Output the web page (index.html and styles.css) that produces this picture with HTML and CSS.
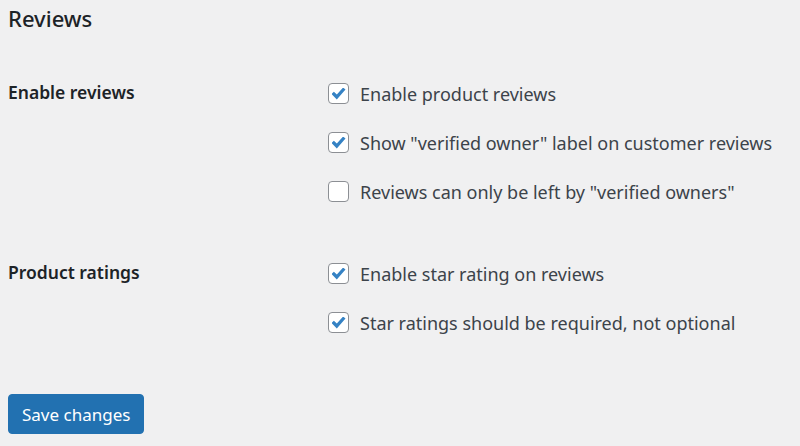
FILE: index.html
```html
<!DOCTYPE html>
<html lang="en">
<head>
<meta charset="UTF-8" />
<title>Reviews settings</title>
<link rel="stylesheet" href="styles.css">
</head>
<body>
  <form class="settings">
    <h2 class="settings-title">Reviews</h2>

    <div class="form-table">
      <div class="form-row">
        <div class="form-label">Enable reviews</div>
        <fieldset class="options">
          <label class="option"><input type="checkbox" checked> Enable product reviews</label>
          <label class="option"><input type="checkbox" checked> Show "verified owner" label on customer reviews</label>
          <label class="option"><input type="checkbox"> Reviews can only be left by "verified owners"</label>
        </fieldset>
      </div>

      <div class="form-row">
        <div class="form-label">Product ratings</div>
        <fieldset class="options">
          <label class="option"><input type="checkbox" checked> Enable star rating on reviews</label>
          <label class="option"><input type="checkbox" checked> Star ratings should be required, not optional</label>
        </fieldset>
      </div>
    </div>

    <button class="button-primary" type="button">Save changes</button>
  </form>
</body>
</html>
```

FILE: styles.css
```css
* {
  box-sizing: border-box;
}
html, body {
  margin: 0;
  padding: 0;
  height: 100%;
  background: #f0f0f1;
  font-family: "Noto Sans", "Open Sans", sans-serif;
  color: #3c434a;
}

.settings {
  padding: 0 8px;
}

/* Section heading */
.settings-title {
  margin: 0;
  padding-top: 2px;
  font-size: 22px;
  line-height: 32px;
  font-weight: 500;
  color: #1d2327;
}

/* Rows: label column + options column */
.form-table {
  display: flex;
  flex-direction: column;
  gap: 33px;
  margin-top: 35px;
}

.form-row {
  display: grid;
  grid-template-columns: 320px 1fr;
}

.form-label {
  height: 49px;
  line-height: 46px;
  font-size: 17.5px;
  font-weight: 600;
  color: #1d2327;
}

.options {
  margin: 0;
  padding: 0;
  border: none;
  display: flex;
  flex-direction: column;
}

.option {
  display: flex;
  align-items: center;
  height: 49px;
  font-size: 18px;
}

/* Checkbox, WP admin look */
.option input[type="checkbox"] {
  appearance: none;
  -webkit-appearance: none;
  width: 21px;
  height: 21px;
  margin: 0 11px 0 0;
  border: 1px solid #8c8f94;
  border-radius: 4px;
  background: #fff;
  display: inline-grid;
  place-content: center;
  flex-shrink: 0;
}

.option input[type="checkbox"]:checked::before {
  content: "";
  width: 14px;
  height: 12px;
  background: #3582c4;
  clip-path: polygon(0 54%, 17% 36%, 38% 58%, 83% 0, 100% 17%, 38% 100%);
}

/* Primary button */
.button-primary {
  margin-top: 47px;
  height: 40px;
  padding: 0 13px;
  background: #2271b1;
  border: 1px solid #2271b1;
  border-radius: 4px;
  color: #fff;
  font-family: inherit;
  font-size: 17px;
  cursor: pointer;
}
```
